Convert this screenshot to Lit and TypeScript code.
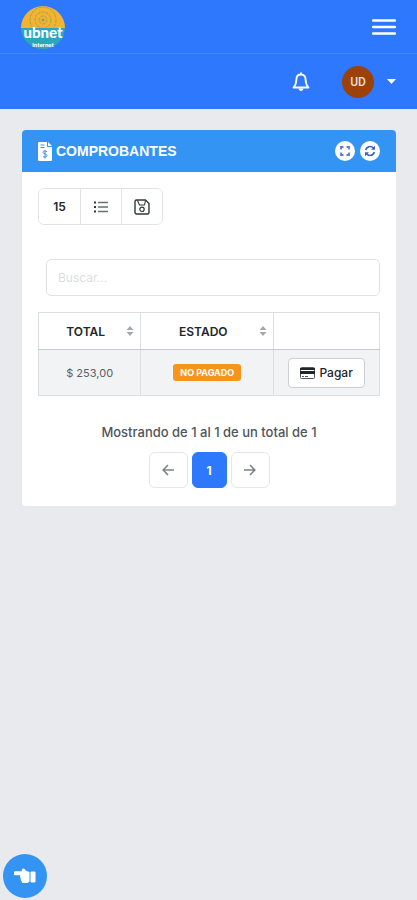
import { LitElement, html, css, svg } from "lit";
import { customElement, state } from "lit/decorators.js";

const sortIcon = html`<svg class="sort" width="8" height="10" viewBox="0 0 8 10" aria-hidden="true">
  <path d="M4 0 7.5 4h-7zM4 10 .5 6h7z" fill="#a3a9ad" />
</svg>`;

const arcs = [4, 8, 13].map(
  (r) => svg`<circle cx="22" cy="15" r=${r} fill="none" stroke="#a3a254" stroke-width="1" stroke-dasharray="3 1" />`
);

@customElement("app-root")
export class AppRoot extends LitElement {
  @state() private query = "";

  private rows = [{ total: "$ 253,00", status: "NO PAGADO" }];

  static styles = css`
    :host {
      display: block;
      min-height: 100vh;
      background: #e8eaed;
      color: #22262a;
      font-family: Inter, "Liberation Sans", sans-serif;
      font-size: 12px;
    }
    * {
      box-sizing: border-box;
    }
    button,
    input {
      font: inherit;
      color: inherit;
      margin: 0;
      padding: 0;
    }
    button {
      cursor: pointer;
    }
    svg {
      display: block;
      flex: none;
    }
    .bar {
      display: flex;
      align-items: center;
      background: #2d78fd;
      color: #fff;
    }
    .brand-bar {
      height: 54px;
      padding: 0 21px;
      justify-content: space-between;
      border-bottom: 1px solid #3a8afc;
    }
    .user-bar {
      height: 55px;
      padding: 0 21px;
      justify-content: flex-end;
    }
    .plain {
      display: flex;
      align-items: center;
      border: 0;
      background: none;
      color: #fff;
    }
    .brand text {
      font-family: Lato, sans-serif;
      font-weight: 900;
      fill: #fff;
    }
    .account {
      gap: 13px;
      margin-left: 32px;
    }
    .avatar {
      display: grid;
      place-items: center;
      width: 32px;
      height: 32px;
      border-radius: 50%;
      background: #9c4208;
      color: #f3dfd2;
      font-family: Roboto, sans-serif;
      font-size: 12px;
      font-weight: 500;
    }
    .card {
      margin: 21px 21px 0 22px;
      border-radius: 4px;
      background: #fff;
      overflow: hidden;
    }
    .card-head {
      display: flex;
      align-items: center;
      justify-content: space-between;
      height: 42px;
      padding: 0 16px;
      background: #3394f4;
      color: #fff;
    }
    .title {
      display: flex;
      align-items: center;
      gap: 4px;
      margin: 0;
      font-family: "Liberation Sans", sans-serif;
      font-size: 14px;
      font-weight: 700;
    }
    .actions {
      display: flex;
      gap: 5px;
    }
    .round {
      display: grid;
      place-items: center;
      width: 20px;
      height: 20px;
      border: 0;
      border-radius: 50%;
      background: #fff;
    }
    .card-body {
      padding: 16px 16px 18px;
    }
    .tools {
      display: flex;
      width: fit-content;
      height: 37px;
      border: 1px solid #e2e3e5;
      border-radius: 6px;
      overflow: hidden;
    }
    .tools button {
      display: grid;
      place-items: center;
      width: 41px;
      border: 0;
      background: #fff;
      font-weight: 600;
    }
    .tools button + button {
      border-left: 1px solid #e2e3e5;
    }
    .search {
      display: block;
      margin: 34px 0 16px 8px;
    }
    .search input {
      display: block;
      width: 100%;
      height: 37px;
      padding: 0 11px;
      border: 1px solid #e0e2e4;
      border-radius: 5px;
      background: #fff;
    }
    .search input::placeholder {
      color: #dcdee0;
      opacity: 1;
    }
    table {
      width: 100%;
      border-collapse: collapse;
      table-layout: fixed;
    }
    .col-total {
      width: 30%;
    }
    .col-action {
      width: 31%;
    }
    th,
    td {
      height: 37px;
      padding: 0 6px;
      border: 1px solid #dcdfe1;
      text-align: center;
    }
    th {
      border-bottom-color: #c6cacc;
      font-size: 12px;
      font-weight: 600;
    }
    td {
      height: 46px;
      background: #f1f3f4;
      color: #5b6064;
      font-size: 11px;
    }
    .th {
      display: flex;
      align-items: center;
    }
    .label {
      flex: 1;
    }
    .badge {
      display: inline-block;
      padding: 0 7px;
      border-radius: 3px;
      background: #f7941d;
      color: #fff;
      font-size: 9px;
      font-weight: 700;
      line-height: 17px;
    }
    .pay {
      display: inline-flex;
      align-items: center;
      justify-content: center;
      gap: 4px;
      width: 77px;
      height: 30px;
      border: 1px solid #ccd0d2;
      border-radius: 4px;
      background: #fff;
      color: #22262a;
      font-size: 12px;
      font-weight: 500;
    }
    .summary {
      margin: 28px 0 12px;
      color: #50555a;
      font-size: 13px;
      font-weight: 500;
      line-height: 16px;
      text-align: center;
    }
    .pager {
      display: flex;
      justify-content: center;
      gap: 4px;
    }
    .pager button {
      display: grid;
      place-items: center;
      width: 39px;
      height: 36px;
      border: 1px solid #e4e6e9;
      border-radius: 6px;
      background: #fff;
      color: #7d8288;
    }
    .pager .current {
      width: 35px;
      border-color: #2d78fd;
      background: #2d78fd;
      color: #fff;
      font-weight: 700;
    }
    .helper {
      position: fixed;
      left: 3px;
      bottom: 2px;
      display: grid;
      place-items: center;
      width: 44px;
      height: 44px;
      border: 0;
      border-radius: 50%;
      background: #3394f4;
    }
  `;

  render() {
    return html`
      <header>
        <div class="bar brand-bar">
          <a class="brand" href="#" aria-label="ubnet internet">
            <svg width="44" height="44" viewBox="0 0 44 44">
              <path d="M0 23a22 22 0 0 1 44 0z" fill="#f2b430" />
              <path d="M0 23h44a22 21 0 0 1-44 0z" fill="#2ba6bd" />
              <clipPath id="sky"><path d="M0 0h44v22.500H0z" /></clipPath>
              <g clip-path="url(#sky)">${arcs}</g>
              <circle cx="22" cy="15" r="1.500" fill="#8f9d5c" />
              <text x="22" y="33" font-size="15" text-anchor="middle">ubnet</text>
              <text x="22" y="42" font-size="6" text-anchor="middle">internet</text>
            </svg>
          </a>
          <button class="plain" aria-label="Menú">
            <svg width="24" height="18" viewBox="0 0 24 18">
              <path d="M1 2.500h22M1 9h22M1 15.500h22" stroke="#fff" stroke-width="2.400" stroke-linecap="round" />
            </svg>
          </button>
        </div>
        <div class="bar user-bar">
          <button class="plain" aria-label="Notificaciones">
            <svg width="18" height="20" viewBox="0 0 18 20" fill="none" stroke="#fff" stroke-width="1.800" stroke-linejoin="round">
              <path d="M9 2.500c-3 0-4.600 2.200-4.600 5 0 4.200-.8 5.700-2.900 8h15c-2.100-2.300-2.900-3.800-2.900-8 0-2.800-1.600-5-4.600-5zM9 .5v2" />
              <path d="M6.500 16.500a2.500 2.500 0 0 0 5 0z" fill="#fff" stroke="none" />
            </svg>
          </button>
          <button class="plain account" aria-label="Cuenta">
            <span class="avatar">UD</span>
            <svg width="9" height="5" viewBox="0 0 9 5"><path d="M0 0h9L4.500 5z" fill="#fff" /></svg>
          </button>
        </div>
      </header>
      <main class="card">
        <div class="card-head">
          <h1 class="title">
            <svg width="14" height="19" viewBox="0 0 14 19">
              <path d="M1 0h8v5h5v13a1 1 0 0 1-1 1H1a1 1 0 0 1-1-1V1a1 1 0 0 1 1-1zM10 0l4 4h-4z" fill="#fff" />
              <path d="M2.500 3h4M2.500 5.500h4M9 9.500C8 8.700 5 8.600 5 10.300S9 11.800 9 13.600 6 15.400 5 14.500M7 8v8.500" fill="none" stroke="#3394f4" stroke-width="1" />
            </svg>
            COMPROBANTES
          </h1>
          <div class="actions">
            <button class="round" aria-label="Pantalla completa">
              <svg width="10" height="10" viewBox="0 0 10 10" fill="none" stroke="#5c7ad8" stroke-width="1.800">
                <path d="M1 3.500V1h2.500M6.500 1H9v2.500M9 6.500V9H6.500M3.500 9H1V6.500" />
              </svg>
            </button>
            <button class="round" aria-label="Actualizar">
              <svg width="12" height="12" viewBox="0 0 12 12" fill="none" stroke="#3c5fc4" stroke-width="1.600">
                <path d="M1.700 5A4.400 4.400 0 0 1 9.500 3.300M10.300 7A4.400 4.400 0 0 1 2.500 8.700" />
                <path d="M11 .8v4H7zM1 11.200v-4h4z" fill="#3c5fc4" stroke="none" />
              </svg>
            </button>
          </div>
        </div>
        <div class="card-body">
          <div class="tools">
            <button>15</button>
            <button aria-label="Columnas">
              <svg width="14" height="12" viewBox="0 0 14 12" stroke="#6b6f73" stroke-width="1.400">
                <path d="M0 1.500h2M0 6h2M0 10.500h2" stroke="#33373b" stroke-width="2" />
                <path d="M4 1.500h10M4 6h10M4 10.500h10" />
              </svg>
            </button>
            <button aria-label="Exportar">
              <svg width="16" height="16" viewBox="0 0 16 16" fill="none" stroke="#33373b" stroke-width="1.400" stroke-linejoin="round">
                <path d="M2.500 1h9L15 4.500v9a1.500 1.500 0 0 1-1.500 1.500h-11A1.500 1.500 0 0 1 1 13.500v-11A1.500 1.500 0 0 1 2.500 1z" />
                <path d="M3.500 1.500 5.500 6h5l1-4.500" stroke-width="1.100" />
                <circle cx="8" cy="10.300" r="2.200" stroke-width="1.200" />
              </svg>
            </button>
          </div>
          <label class="search">
            <input
              type="text"
              placeholder="Buscar..."
              aria-label="Buscar"
              .value=${this.query}
              @input=${(e: Event) => (this.query = (e.target as HTMLInputElement).value)}
            />
          </label>
          <table>
            <colgroup><col class="col-total" /><col /><col class="col-action" /></colgroup>
            <thead>
              <tr>
                <th><div class="th"><span class="label">TOTAL</span>${sortIcon}</div></th>
                <th><div class="th"><span class="label">ESTADO</span>${sortIcon}</div></th>
                <th></th>
              </tr>
            </thead>
            <tbody>
              ${this.rows.map(
                (row) => html`<tr>
                  <td>${row.total}</td>
                  <td><span class="badge">${row.status}</span></td>
                  <td>
                    <button class="pay">
                      <svg width="15" height="12" viewBox="0 0 15 12">
                        <rect x=".5" y=".5" width="14" height="11" rx="1" fill="#fff" stroke="#55595d" />
                        <path d="M0 1h15v2H0zM0 4h15v3H0z" fill="#22262a" />
                        <path d="M2 9.500h2M5 9.500h3" stroke="#55595d" />
                      </svg>
                      Pagar
                    </button>
                  </td>
                </tr>`
              )}
            </tbody>
          </table>
          <p class="summary">Mostrando de 1 al 1 de un total de 1</p>
          <nav class="pager" aria-label="Paginación">
            <button aria-label="Anterior">
              <svg width="12" height="12" viewBox="0 0 12 12" fill="none" stroke="currentColor" stroke-width="1.600">
                <path d="M12 6H1.500M6 1 1.200 6 6 11" />
              </svg>
            </button>
            <button class="current" aria-current="page">1</button>
            <button aria-label="Siguiente">
              <svg width="12" height="12" viewBox="0 0 12 12" fill="none" stroke="currentColor" stroke-width="1.600">
                <path d="M0 6h10.500M6 1l4.800 5L6 11" />
              </svg>
            </button>
          </nav>
        </div>
      </main>
      <button class="helper" aria-label="Abrir panel">
        <svg width="22" height="16" viewBox="0 0 22 16" fill="#fff">
          <path d="M1.500 3.300H8C7.500 2 8 .5 9.500.5c1 0 1.500 1.500 2.500 2.300L15.500 4v9.500l-2 1.500H9.500c-1.500 0-2-1-1.800-2-1-.4-1.300-1.600-.8-2.400C6 10 5.700 8.500 6.500 7.300h-5a2 2 0 0 1 0-4z" />
          <rect x="16.500" y="3.500" width="5" height="11" rx="1" />
        </svg>
      </button>
    `;
  }
}
